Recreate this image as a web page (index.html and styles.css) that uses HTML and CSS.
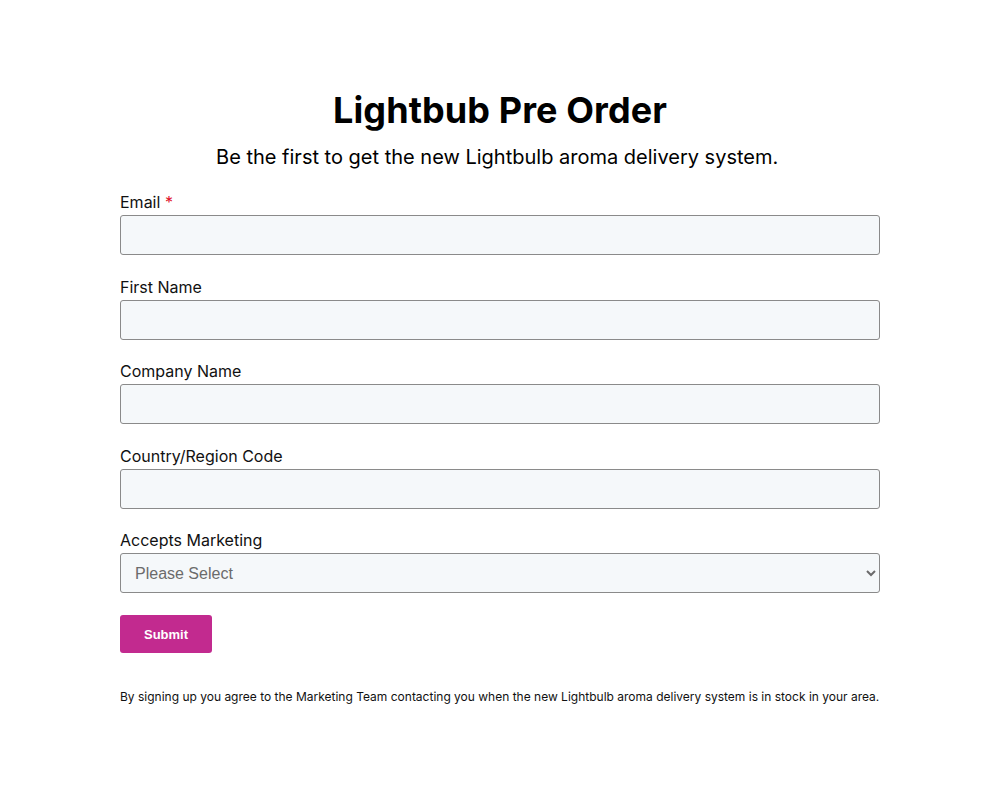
FILE: index.html
```html
<!DOCTYPE html>
<html lang="en">
<head>
<meta charset="utf-8">
<title>Lightbub Pre Order</title>
<link rel="stylesheet" href="styles.css">
</head>
<body>
<main class="page">
  <h1 class="title">Lightbub Pre Order</h1>
  <p class="subtitle">Be the first to get the new Lightbulb aroma delivery system.&nbsp;</p>
  <form class="form">
    <div class="field">
      <label class="label" for="email">Email <span class="req">*</span></label>
      <input class="input" id="email" type="email">
    </div>
    <div class="field">
      <label class="label" for="fname">First Name</label>
      <input class="input" id="fname" type="text">
    </div>
    <div class="field">
      <label class="label" for="company">Company Name</label>
      <input class="input" id="company" type="text">
    </div>
    <div class="field">
      <label class="label" for="country">Country/Region Code</label>
      <input class="input" id="country" type="text">
    </div>
    <div class="field">
      <label class="label" for="marketing">Accepts Marketing</label>
      <select class="input select" id="marketing">
        <option>Please Select</option>
        <option>Yes</option>
        <option>No</option>
      </select>
    </div>
    <button class="submit" type="button">Submit</button>
  </form>
  <p class="legal">By signing up you agree to the Marketing Team contacting you when the new Lightbulb aroma delivery system is in stock in your area.</p>
</main>
</body>
</html>
```
FILE: styles.css
```css
html, body {
  margin: 0;
  padding: 0;
  background: #ffffff;
}
body {
  font-family: Inter, "Noto Sans", sans-serif;
  color: #000000;
}
.page {
  width: 760px;
  margin: 0 auto;
  padding-top: 88px;
}
.title {
  margin: 0;
  font-size: 36px;
  line-height: 44px;
  font-weight: 700;
  text-align: center;
  letter-spacing: 0.1px;
}
.subtitle {
  margin: 11px 0 0;
  font-size: 20px;
  line-height: 28px;
  text-align: center;
}
.form {
  margin-top: 19px;
}
.field {
  display: flex;
  flex-direction: column;
  margin-bottom: 19.5px;
}
.label {
  font-size: 16px;
  line-height: 24px;
  margin-bottom: 1px;
  color: #111;
}
.req {
  color: #e0102a;
}
.input {
  box-sizing: border-box;
  height: 40px;
  width: 100%;
  margin: 0;
  background: #f5f8fa;
  border: 1px solid #8a8a8a;
  border-radius: 3px;
  font-family: "Liberation Sans", Arial, sans-serif;
  font-size: 16px;
  padding: 0 14px;
}
.select {
  color: #6b6b6b;
  padding: 0 10px;
}
.submit {
  margin-top: 2.5px;
  width: 92px;
  height: 38px;
  background: #c22a8f;
  color: #ffffff;
  border: none;
  border-radius: 3px;
  font-family: "Liberation Sans", Arial, sans-serif;
  font-weight: 700;
  font-size: 13px;
  padding: 0;
}
.legal {
  margin: 36px 0 0;
  font-size: 12px;
  line-height: 16px;
  color: #111;
}
```
